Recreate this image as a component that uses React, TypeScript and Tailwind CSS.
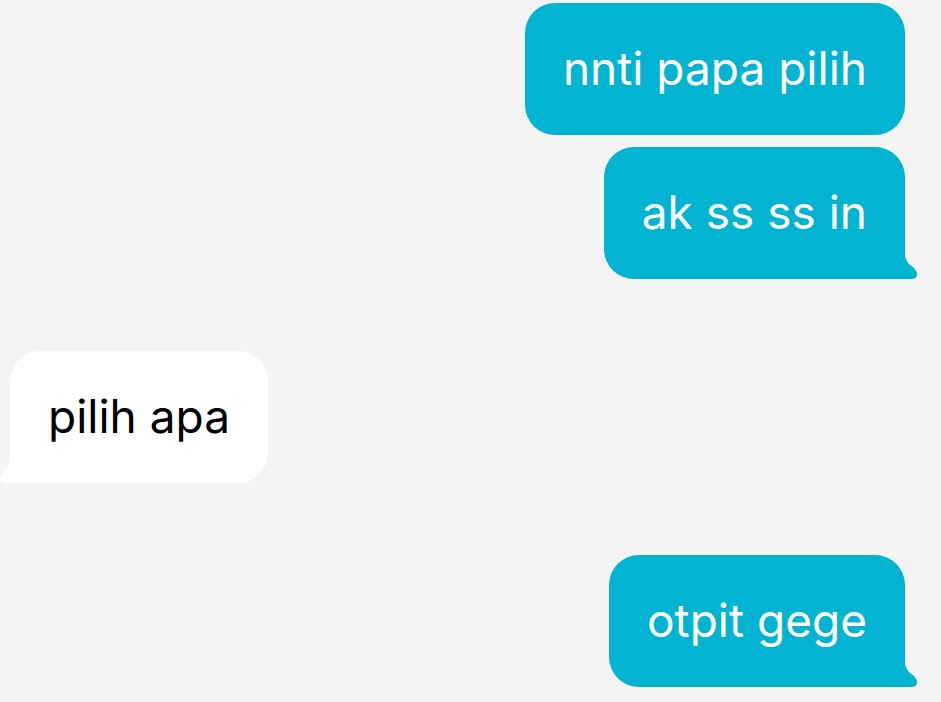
import React from "react";

const CYAN = "#02b4d2";

function TailRight({ color }: { color: string }) {
  return (
    <svg className="absolute right-[-12px] bottom-0" width="42" height="34" viewBox="0 0 42 34">
      <path
        d="M0 0 H30 V9 C30 16 34 19 37 21.5 C41 24.5 42 27 42 29.5 C42 32.5 39.5 34 36 34 H0 Z"
        fill={color}
      />
    </svg>
  );
}

function TailLeft({ color }: { color: string }) {
  return (
    <svg className="absolute left-[-10px] bottom-0" width="40" height="34" viewBox="0 0 40 34">
      <path
        d="M40 0 H10 V9 C10 16 6.5 19 4 21.5 C1 24.5 0 27 0 29.5 C0 32.5 2.5 34 6 34 H40 Z"
        fill={color}
      />
    </svg>
  );
}

function Out({ text, tail }: { text: string; tail?: boolean }) {
  return (
    <div className="flex justify-end pr-[36px]">
      <div className="relative h-[132px] rounded-[30px] bg-[#02b4d2] px-[38px] flex items-center text-white text-[46px] leading-none">
        <span className="relative z-10 pb-[2px]">{text}</span>
        {tail && <TailRight color={CYAN} />}
      </div>
    </div>
  );
}

export default function App() {
  return (
    <div
      className="w-[941px] h-[702px] bg-[#f4f4f4] overflow-hidden pt-[3px]"
      style={{ fontFamily: "Inter, 'Noto Sans', sans-serif" }}
    >
      <div className="flex flex-col">
        <Out text="nnti papa pilih" />
        <div className="h-[12px]" />
        <Out text="ak ss ss in" tail />
        <div className="h-[72px]" />
        <div className="flex justify-start pl-[10px]">
          <div className="relative h-[132px] rounded-[30px] bg-white px-[38px] flex items-center text-black text-[46px] leading-none">
            <span className="relative z-10 pb-[2px]">pilih apa</span>
            <TailLeft color="#ffffff" />
          </div>
        </div>
        <div className="h-[72px]" />
        <Out text="otpit gege" tail />
      </div>
    </div>
  );
}
